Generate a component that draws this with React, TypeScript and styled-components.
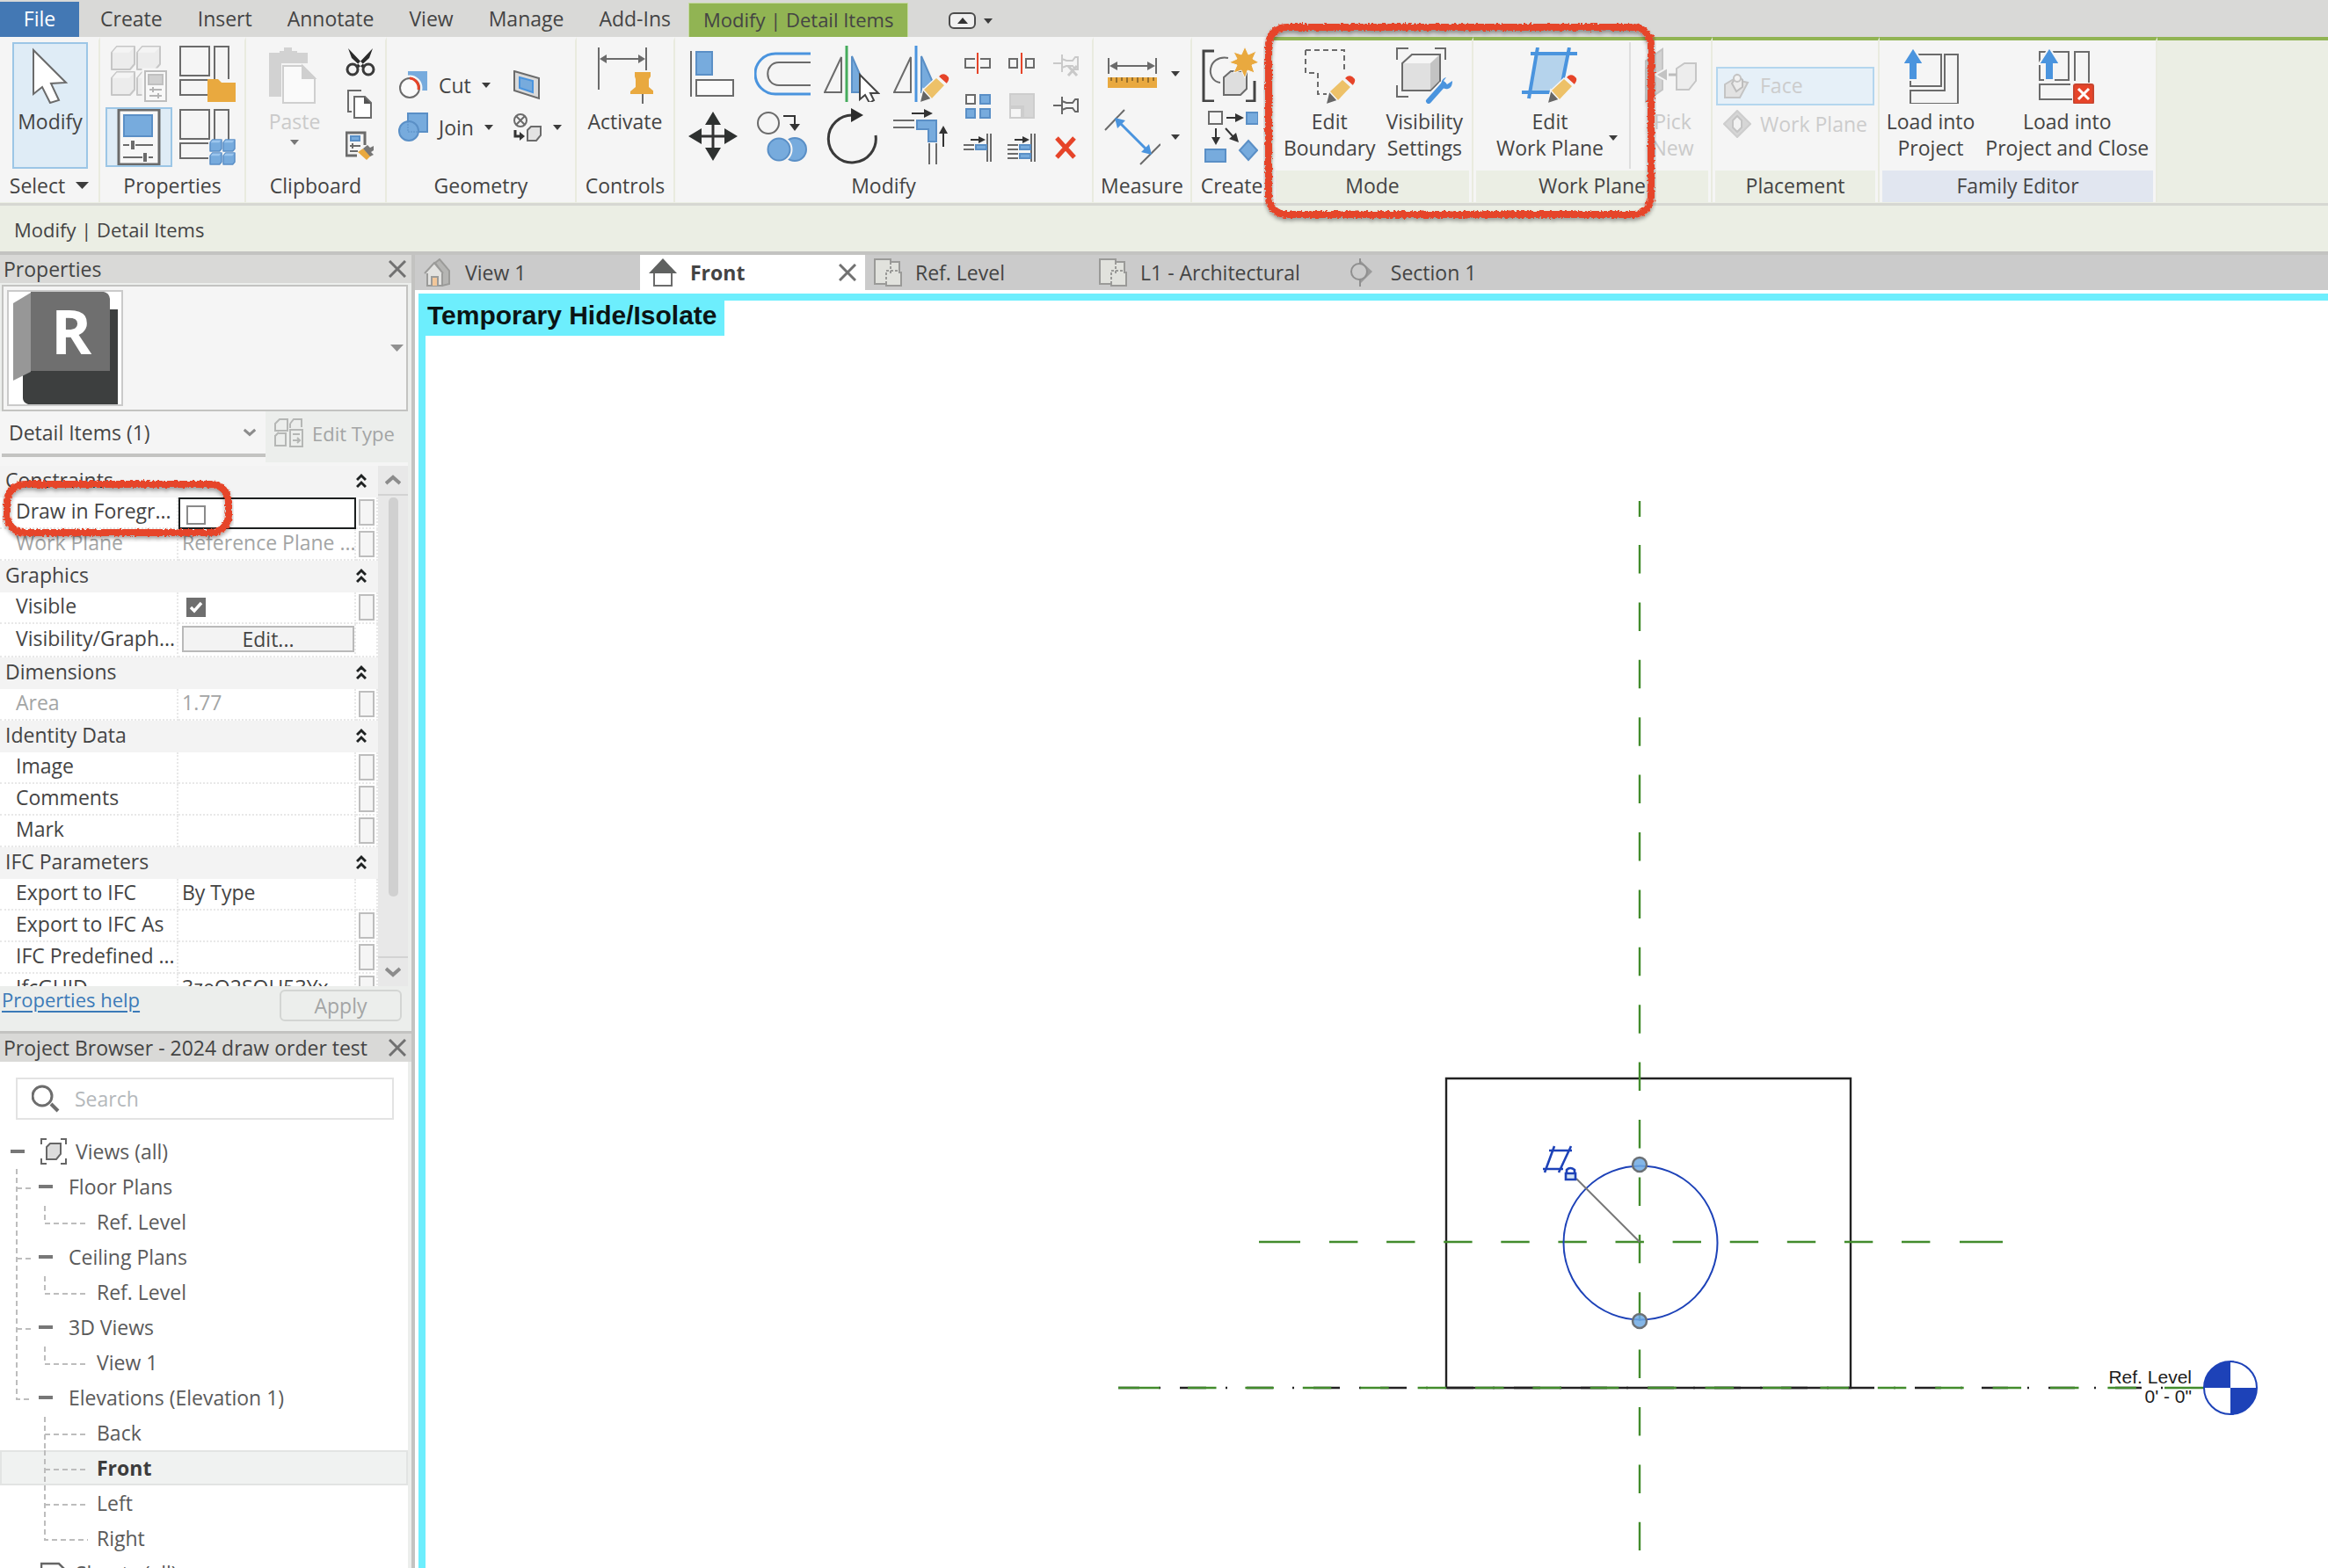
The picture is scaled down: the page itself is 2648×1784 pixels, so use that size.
import React from "react";
import styled, { createGlobalStyle, css } from "styled-components";

const c = {
  bar: "#d9d9d7",
  panel: "#f5f5f5",
  olive: "#ebeee4",
  green: "#91b453",
  rule: "#c3c3c1",
  soft: "#eceeec",
  text: "#444444",
  muted: "#a3a5a5",
  faint: "#cacaca",
  line: "#6b6b6b",
  sky: "#77abdd",
  skyLine: "#5a8fc6",
  azure: "#4a94de",
  amber: "#e9a93f",
  red: "#e64429",
  cyan: "#6deefd",
  ref: "#428c2c",
  ink: "#1d42b8",
};

const GlobalStyle = createGlobalStyle`
  *, *::before, *::after { box-sizing: border-box; }
  body { margin: 0; overflow: hidden; }
  body, button, input, select {
    font-family: "Open Sans", "Noto Sans", sans-serif;
    font-size: 23px;
    color: ${c.text};
  }
  button { background: none; border: 0; padding: 0; margin: 0; cursor: pointer; }
  svg { display: block; flex: none; }
  ul { list-style: none; margin: 0; padding: 0; }
`;

const Shell = styled.div`
  position: relative;
  height: 100vh;
  display: flex;
  flex-direction: column;
  background: #fff;
  overflow: hidden;
`;

/* ---------- ribbon tabs ---------- */

const TabBar = styled.nav`
  display: flex;
  height: 42px;
  flex: none;
  padding-top: 2px;
  background: ${c.bar};
`;

const RibbonTab = styled.button<{ $kind?: "file" | "active" }>`
  padding: 0 20px;
  line-height: 38px;
  padding-bottom: 2px;
  white-space: nowrap;
  ${(p) =>
    p.$kind === "file" &&
    css`
      width: 90px;
      margin-right: 4px;
      background: #4378b4;
      color: #fff;
    `}
  ${(p) =>
    p.$kind === "active" &&
    css`
      padding: 0 16px 2px;
      margin-top: 1px;
      border: 1px solid #c5dba0;
      border-bottom: 0;
      font-size: 22px;
      line-height: 36px;
      background: ${c.green};
    `}
`;

const RibbonToggle = styled.button`
  display: flex;
  align-items: center;
  gap: 8px;
  margin-left: 46px;
  padding-top: 4px;
`;

/* ---------- ribbon ---------- */

const Ribbon = styled.section`
  display: flex;
  flex: none;
  padding-bottom: 1px;
  border-bottom: 3px solid #d6d7d2;
  background: ${c.olive};
`;

const Panel = styled.div<{ $w: number; $context?: boolean }>`
  flex: none;
  display: flex;
  flex-direction: column;
  width: ${(p) => p.$w}px;
  border-top: 4px solid ${(p) => (p.$context ? c.green : c.panel)};
  border-right: 2px solid #e9ebdf;
  background: ${c.panel};
`;

const RibbonRest = styled.div`
  flex: 1;
  border-top: 4px solid ${c.green};
`;

const PanelTitle = styled.h2<{ $bg?: string }>`
  display: flex;
  justify-content: center;
  align-items: center;
  gap: 12px;
  height: 36px;
  margin: 0 3px;
  padding-bottom: 2px;
  font-size: 23px;
  font-weight: 400;
  white-space: nowrap;
  background: ${(p) => p.$bg ?? "transparent"};
`;

const Row = styled.div<{ $gap?: number; $justify?: string; $pad?: string }>`
  display: flex;
  align-items: flex-start;
  height: 148px;
  gap: ${(p) => p.$gap ?? 0}px;
  justify-content: ${(p) => p.$justify ?? "center"};
  padding: ${(p) => p.$pad ?? "2px 0 0"};
`;

const Matrix = styled.div<{ $cols: string; $row: number; $gap?: number; $pad?: string }>`
  display: grid;
  grid-template-columns: ${(p) => p.$cols};
  grid-auto-rows: ${(p) => p.$row}px;
  gap: ${(p) => p.$gap ?? 0}px;
  padding: ${(p) => p.$pad ?? "0"};
  align-content: start;
  height: 148px;
`;

const activeBox = css`
  border: 2px solid #9cc6e6;
  background: #dfecf6;
`;

const BigButton = styled.button<{ $active?: boolean; $off?: boolean }>`
  display: flex;
  flex-direction: column;
  align-items: center;
  padding: 4px 4px 0;
  height: 144px;
  line-height: 30px;
  white-space: pre-line;
  border: 2px solid transparent;
  color: ${(p) => (p.$off ? c.faint : c.text)};
  ${(p) => p.$active && activeBox}
  svg + span { margin-top: 5px; }
  span + svg { margin-top: 6px; }
`;

const IconButton = styled.button<{ $active?: boolean; $left?: boolean }>`
  display: flex;
  align-items: center;
  justify-content: ${(p) => (p.$left ? "flex-start" : "center")};
  gap: 12px;
  white-space: nowrap;
  ${(p) => p.$active && activeBox}
`;

const SmallStack = styled.div`
  display: flex;
  flex-direction: column;
  gap: 14px;
  padding-top: 5px;
`;

const SplitButton = styled.div`
  display: flex;
  flex: 0 0 179px;
  padding-left: 20px;
  height: 144px;
  border-right: 2px solid #dedede;
  > button + button { align-self: flex-start; padding-top: 106px; }
`;

const Fill = styled.div`
  flex: 1;
  display: flex;
  justify-content: center;
  padding-left: 4px;
`;

const PlaceButton = styled.button<{ $active?: boolean }>`
  display: flex;
  align-items: center;
  gap: 10px;
  height: 44px;
  width: 100%;
  padding: 0 0 2px 6px;
  border: 2px solid ${(p) => (p.$active ? "#b4d6ee" : "transparent")};
  background: ${(p) => (p.$active ? "#e6f0f8" : "transparent")};
  color: #cccccc;
  white-space: nowrap;
`;

const OptionsBar = styled.div`
  flex: none;
  height: 56px;
  padding-left: 16px;
  font-size: 22px;
  line-height: 54px;
  background: ${c.olive};
  border-bottom: 4px solid ${c.rule};
`;

/* ---------- workspace ---------- */

const Workspace = styled.main`
  flex: 1;
  min-height: 0;
  display: flex;
`;

const Dock = styled.aside`
  flex: 0 0 472px;
  display: flex;
  flex-direction: column;
  border-right: 4px solid ${c.rule};
  background: ${c.soft};
`;

const Palette = styled.section<{ $grow: number }>`
  flex: ${(p) => p.$grow} 1 0;
  min-height: 0;
  display: flex;
  flex-direction: column;
  & + & { border-top: 3px solid ${c.rule}; }
`;

const PaletteHeader = styled.header`
  display: flex;
  align-items: center;
  justify-content: space-between;
  flex: none;
  height: 32px;
  padding: 0 6px 0 4px;
  background: ${c.bar};
`;

const PaletteTitle = styled.h2`
  margin: 0;
  font-size: 23px;
  line-height: 32px;
  font-weight: 400;
  white-space: nowrap;
`;

const TypeSelector = styled.button`
  display: flex;
  align-items: center;
  justify-content: space-between;
  flex: none;
  height: 144px;
  margin: 2px 4px 0 2px;
  padding: 0 3px 0 4px;
  border: 2px solid ${c.rule};
  background: ${c.panel};
`;

const Thumb = styled.span`
  width: 132px;
  height: 132px;
  border: 2px solid #cacaca;
  background: #fff;
`;

const FilterRow = styled.div`
  display: flex;
  flex: none;
  height: 62px;
  margin-right: 4px;
  padding-left: 2px;
  background: ${c.panel};
`;

const FilterField = styled.div`
  flex: 1;
  display: flex;
  align-items: center;
  height: 52px;
  padding-right: 11px;
  border-bottom: 4px solid ${c.rule};
`;

const FilterSelect = styled.select`
  flex: 1;
  appearance: none;
  border: 0;
  height: 44px;
  padding: 0 0 0 8px;
  background: transparent;
`;

const EditType = styled.button`
  display: flex;
  align-items: center;
  gap: 9px;
  width: 162px;
  height: 58px;
  padding: 0 0 8px 10px;
  background: ${c.soft};
  color: ${c.muted};
  font-size: 22px;
  white-space: nowrap;
`;

const GridArea = styled.div`
  flex: 1;
  min-height: 0;
  display: flex;
  margin-right: 4px;
  overflow: hidden;
`;

const GridClip = styled.div`
  flex: 1;
  overflow: hidden;
  background: #fff;
`;

const PropTable = styled.table`
  width: 100%;
  table-layout: fixed;
  border-collapse: separate;
  border-spacing: 0;
`;

const GroupRow = styled.tr`
  background: #f3f3f3;
  th {
    height: 36px;
    padding: 0 0 4px 6px;
    font-weight: 400;
    text-align: left;
    line-height: 32px;
  }
  td { padding: 0 0 2px; }
`;

const PropRow = styled.tr<{ $off?: boolean }>`
  color: ${(p) => (p.$off ? c.muted : c.text)};
  th, td {
    height: 36px;
    padding: 0 0 4px;
    font-weight: 400;
    text-align: left;
    line-height: 30px;
    white-space: nowrap;
    overflow: hidden;
    border-right: 2px dotted #e8e8e8;
    border-bottom: 2px dotted #e8e8e8;
  }
  th { padding-left: 18px; }
  td { padding-left: 4px; }
  td:last-child { padding: 0 0 0 3px; }
`;

const FocusCell = styled.td`
  && {
    padding: 0 0 0 6px;
    border: 2px solid #1c1f1f;
  }
`;

const Check = styled.input`
  appearance: none;
  display: block;
  width: 22px;
  height: 22px;
  margin: 3px 0 0 1px;
  border: 2px solid #8a8a8a;
  background: #fff;
  &:checked {
    margin-left: 5px;
    border-color: #6e6e6e;
    background: #6e6e6e url("data:image/svg+xml,%3Csvg xmlns='http://www.w3.org/2000/svg' viewBox='0 0 18 18'%3E%3Cpath d='M3 9l4 4 8-9' fill='none' stroke='white' stroke-width='3.4'/%3E%3C/svg%3E") center / 18px 18px no-repeat;
  }
`;

const EditCellButton = styled.button`
  display: block;
  width: 196px;
  height: 30px;
  margin-top: 2px;
  border: 2px solid #b9b9b9;
  background: #f3f3f3;
  line-height: 26px;
`;

const Associate = styled.button`
  display: block;
  width: 18px;
  height: 30px;
  border: 2px solid #bdbdbd;
  background: #f5f5f5;
`;

const ScrollTrack = styled.div`
  flex: 0 0 34px;
  display: flex;
  flex-direction: column;
  align-items: center;
  background: #e8e8e8;
`;

const ScrollButton = styled.button<{ $end?: boolean }>`
  display: flex;
  align-items: center;
  justify-content: center;
  width: 34px;
  height: 34px;
  border: 0 solid #d3d3d3;
  border-bottom-width: ${(p) => (p.$end ? 0 : 2)}px;
  border-top-width: ${(p) => (p.$end ? 2 : 0)}px;
`;

const ScrollLane = styled.div`
  flex: 1;
  padding-top: 2px;
`;

const ScrollThumb = styled.div`
  width: 11px;
  height: 87%;
  border-radius: 5px;
  background: #d0d0d0;
`;

const PaletteFooter = styled.footer`
  display: flex;
  justify-content: space-between;
  align-items: flex-start;
  flex: none;
  height: 51px;
  padding: 4px 11px 0 2px;
`;

const HelpLink = styled.a`
  color: #3b7ab8;
  font-size: 22px;
  line-height: 22px;
  text-underline-offset: 4px;
  text-decoration-thickness: 2px;
`;

const ApplyButton = styled.button`
  width: 139px;
  height: 36px;
  border: 2px solid #d3d5d3;
  border-radius: 6px;
  color: ${c.muted};
  line-height: 32px;
`;

const BrowserBody = styled.div`
  flex: 1;
  min-height: 0;
  margin-right: 4px;
  padding-top: 18px;
  background: #fff;
  overflow: hidden;
`;

const SearchBox = styled.label`
  display: flex;
  align-items: center;
  gap: 17px;
  height: 48px;
  margin: 0 16px 16px 18px;
  padding-left: 16px;
  border: 2px solid #e3e3e3;
  input {
    flex: 1;
    min-width: 0;
    border: 0;
    padding: 0;
    outline: 0;
    background: transparent;
  }
  input::placeholder { color: #b4b8bb; opacity: 1; }
`;

const TreeItem = styled.li<{ $selected?: boolean }>`
  display: flex;
  height: 40px;
  background: ${(p) => (p.$selected ? "#f0f2f1" : "transparent")};
  box-shadow: ${(p) => (p.$selected ? "inset 0 0 0 2px #e2e4e3" : "none")};
  button {
    line-height: 38px;
    font-weight: ${(p) => (p.$selected ? 700 : 400)};
    color: ${(p) => (p.$selected ? "#3c3c3c" : "#5a5a5a")};
    white-space: nowrap;
  }
`;

const TreeLabel = styled.button`
  display: flex;
  align-items: center;
  gap: 10px;
`;

const ViewArea = styled.section`
  flex: 1;
  min-width: 0;
  display: flex;
  flex-direction: column;
`;

const ViewTabs = styled.nav`
  display: flex;
  flex: none;
  height: 40px;
  background: #cbcbcb;
`;

const ViewTab = styled.div<{ $active?: boolean }>`
  display: flex;
  align-items: center;
  min-width: 256px;
  padding: 0 ${(p) => (p.$active ? 10 : 46)}px 0 10px;
  background: ${(p) => (p.$active ? "#fff" : "transparent")};
  > button:first-child {
    display: flex;
    align-items: center;
    flex: 1;
    gap: 15px;
    line-height: 40px;
    font-weight: ${(p) => (p.$active ? 700 : 400)};
    white-space: nowrap;
  }
`;

const Canvas = styled.div`
  flex: 1;
  min-height: 0;
  margin: 4px 0 0 4px;
  border: solid ${c.cyan};
  border-width: 8px 0 0 8px;
  overflow: hidden;
`;

const HideIsolate = styled.h1`
  width: max-content;
  height: 40px;
  margin: 0;
  padding: 0 8px 0 2px;
  background: ${c.cyan};
  color: #0b1414;
  font: 700 30px/34px "Liberation Sans", Arial, sans-serif;
`;

const Drawing = styled.svg`
  width: 100%;
  height: auto;
  font-family: "Liberation Sans", Arial, sans-serif;
`;

const Marker = styled.svg<{ $x: number; $y: number }>`
  position: absolute;
  left: ${(p) => p.$x}px;
  top: ${(p) => p.$y}px;
  pointer-events: none;
`;

/* ---------- icons ---------- */

type IconProps = { s?: number; children: React.ReactNode };
const Ico = ({ s = 64, children }: IconProps) => (
  <svg width={s} height={s} viewBox={`0 0 ${s} ${s}`} fill="none" stroke={c.line} strokeWidth={2} aria-hidden="true">
    {children}
  </svg>
);

const Caret = ({ w = 10, fill = "#3c3c3c" }: { w?: number; fill?: string }) => (
  <svg width={w} height={w > 12 ? 8 : 6} viewBox="0 0 10 6" preserveAspectRatio="none" aria-hidden="true">
    <path d="M0 0h10L5 6z" fill={fill} />
  </svg>
);

const Close = () => (
  <svg width={20} height={20} viewBox="0 0 20 20" stroke="#717171" strokeWidth={3} aria-hidden="true">
    <path d="M1 1l18 18M19 1L1 19" />
  </svg>
);

const Pencil = ({ x = 0, y = 0 }: { x?: number; y?: number }) => (
  <g transform={`translate(${x} ${y})`} stroke="#f5f5f5" strokeWidth={1.5}>
    <path d="M30 65l4-16 11 11z" fill="#666" />
    <path d="M34 50l15-14 10 9-15 16z" fill="#edc168" />
    <path d="M51 35c3-4 6-5 10-2s4 6 0 11z" fill={c.red} />
  </g>
);

const Cube = ({ x, y, s, fill, line, top }: { x: number; y: number; s: number; fill: string; line: string; top: string }) => (
  <g transform={`translate(${x} ${y})`} stroke={line} strokeWidth={s > 20 ? 2 : 1.5} strokeLinejoin="round">
    <path d={`M1 ${s * 0.28}L${s * 0.25} 1H${s - 1}V${s * 0.75}L${s * 0.78} ${s - 1}H1z`} fill={fill} />
    <path d={`M1.500 ${s * 0.28}L${s * 0.25} 1.500H${s - 1.5}L${s * 0.75} ${s * 0.28}z`} fill={top} stroke="none" />
  </g>
);

const CursorIcon = () => (
  <Ico><path d="M13 3v50l10-8 9 18 10-3-9-19 17-1z" fill="#fff" /></Ico>
);

const TypePropsIcon = () => (
  <Ico>
    {[[0, 0], [29, 0], [0, 29], [29, 29]].map(([x, y]) => (
      <Cube key={`${x}-${y}`} x={x} y={y} s={28} fill="#ececec" line="#c6c6c6" top="#f4f4f4" />
    ))}
    <rect x="37" y="27" width="27" height="37" fill="#f5f5f5" stroke="#f5f5f5" strokeWidth="3" />
    <rect x="39" y="29" width="24" height="34" fill="#f8f8f8" stroke="#bdbdbd" />
    <path d="M43 33h16v11H43z" fill="#d0d0d0" stroke="#c0c0c0" />
    <path d="M44 50h14M44 57h14M48 47v6M54 54v6" stroke="#b5b5b5" />
  </Ico>
);

const WindowLayout = () => <path d="M1 1h33v33H1zM40 38V1h16v37M33 39H1v17h32" />;

const FolderTypeIcon = () => (
  <Ico><WindowLayout /><path d="M32 38h12l4 4h16v22H32z" fill={c.amber} stroke="none" /></Ico>
);

const FamilyTypesIcon = () => (
  <Ico>
    <WindowLayout />
    {[[34, 34], [49, 34], [34, 49], [49, 49]].map(([x, y]) => (
      <Cube key={`${x}-${y}`} x={x} y={y} s={15} fill={c.sky} line={c.skyLine} top="#9cc6ee" />
    ))}
  </Ico>
);

const PropertiesIcon = () => (
  <Ico>
    <rect x="9" y="1" width="46" height="62" fill="#f7f7f7" strokeWidth="3" />
    <rect x="15" y="7" width="32" height="24" fill={c.sky} stroke={c.skyLine} />
    <path d="M14 41h7M28 41h20M14 55h22M43 55h5" />
    <path d="M25 36v10M39 50v10" strokeWidth="4" />
  </Ico>
);

const PasteIcon = () => (
  <Ico>
    <path d="M3 6h12V4h5V0h9v4h6v2h12v12H17v38H3z" fill="#d2d2d2" stroke="none" />
    <path d="M19 21h22l14 14v28H19z" fill="#fafafa" stroke="#cfcfcf" />
    <path d="M41 21v14h14z" fill="#cfcfcf" stroke="#cfcfcf" />
  </Ico>
);

const ScissorsIcon = () => (
  <Ico s={34}>
    <path d="M3 2l20 21-4 1L7 13zM31 2L11 23l4 1 12-11z" fill="#2b2b2b" stroke="none" />
    <circle cx="8" cy="26" r="6" stroke="#3a3a3a" strokeWidth="3" />
    <circle cx="26" cy="26" r="6" stroke="#3a3a3a" strokeWidth="3" />
  </Ico>
);

const CopyIcon = () => (
  <Ico s={34}>
    <path d="M7 26H3V2h15" />
    <path d="M10 9h12l7 7v17H10z" fill="#fff" />
    <path d="M21 9v8h8z" fill="#555" stroke="none" />
  </Ico>
);

const MatchIcon = () => (
  <Ico s={34}>
    <path d="M13 28H1V2h21v14" strokeWidth="3" />
    <path d="M6 6h10v5H6z" fill={c.sky} stroke={c.skyLine} />
    <path d="M5 17h12M5 23h9M8 14v6" />
    <path d="M14 24l6-4 9 8-5 5z" fill={c.amber} stroke="none" />
    <path d="M20 20l5-4 3 3 4-2v5l-3 2 3 3-4 2z" fill="#777" stroke="none" />
  </Ico>
);

const CutGeoIcon = () => (
  <Ico s={34}>
    <path d="M11 1h22v22H22L11 9z" fill={c.sky} stroke="none" />
    <circle cx="13" cy="20" r="12" fill="#f5f5f5" stroke="#f5f5f5" strokeWidth="5" />
    <circle cx="13" cy="20" r="11" fill="#fafafa" />
    <path d="M13 9a11 11 0 0 1 10 13" stroke={c.red} strokeWidth="3" />
  </Ico>
);

const JoinGeoIcon = () => (
  <Ico s={34}>
    <path d="M11 1h22v21H11z" fill={c.sky} stroke={c.skyLine} />
    <circle cx="12" cy="21" r="11" fill={c.sky} stroke={c.skyLine} />
    <path d="M11 10v12h11" stroke={c.skyLine} strokeDasharray="2 1" strokeWidth="1" />
  </Ico>
);

const CopeIcon = () => (
  <Ico s={34}>
    <path d="M2 1l28 8v23L2 23z" fill="#dadada" />
    <path d="M8 8l15 4v13L8 20z" fill={c.sky} stroke={c.azure} />
  </Ico>
);

const PaintIcon = () => (
  <Ico s={34}>
    <circle cx="9" cy="9" r="7" />
    <path d="M4 4l10 10M14 4L4 14" />
    <path d="M3 20v7h6" stroke="#333" strokeWidth="3" />
    <path d="M8 22l6 5-6 5z" stroke="none" fill="#333" />
    <path d="M17 20l4-4h11v10l-5 6H17z" fill="#e3e3e3" />
  </Ico>
);

const ActivateIcon = () => (
  <Ico>
    <path d="M2 0v48M56 0v26M6 13h46" />
    <path d="M3 13l8-5v10zM55 13l-8-5v10z" fill={c.line} stroke="none" />
    <path d="M43 28h18v5l-2 3v9l6 5v3H38v-3l6-5v-9l-1-3z" fill={c.amber} stroke="none" />
    <path d="M52 53v11" />
  </Ico>
);

const AlignIcon = () => (
  <Ico>
    <path d="M7 6v52" />
    <path d="M13 7h18v26H13z" fill={c.sky} stroke={c.skyLine} />
    <path d="M13 39h42v18H13z" fill="#fafafa" />
  </Ico>
);

const OffsetIcon = () => (
  <Ico>
    <path d="M64 9H24a23 23 0 0 0 0 46h40" stroke={c.azure} strokeWidth="3" />
    <path d="M64 19H28c-17 0-17 26 0 26h36" />
  </Ico>
);

const Mirror = ({ axis, children }: { axis: string; children: React.ReactNode }) => (
  <Ico>
    <path d="M20 13v40H1z" />
    <path d="M32 12l18 41H32z" fill={c.sky} stroke={c.skyLine} />
    <path d="M26 0v64" stroke={axis} strokeWidth="3" />
    {children}
  </Ico>
);

const MirrorPickIcon = () => (
  <Mirror axis="#45ab5c"><path d="M41 33v28l6-5 5 9 5-3-4-8h9z" fill="#fff" stroke="#444" /></Mirror>
);
const MirrorDrawIcon = () => <Mirror axis={c.azure}><Pencil /></Mirror>;

const MoveIcon = () => (
  <Ico>
    <path d="M32 14v36M14 32h36" stroke="#333" strokeWidth="3" />
    <path d="M32 4l9 15H23zM32 60l9-15H23zM4 32l15-9v18zM60 32l-15-9v18z" fill="#2e3130" stroke="none" />
  </Ico>
);

const CopyToolIcon = () => (
  <Ico>
    <circle cx="16" cy="17" r="12" />
    <circle cx="46" cy="47" r="13" fill={c.sky} stroke={c.skyLine} />
    <circle cx="28" cy="47" r="14" fill={c.sky} stroke="#f5f5f5" strokeWidth="3" />
    <circle cx="28" cy="47" r="12.500" stroke={c.skyLine} />
    <path d="M33 9h13v12" stroke="#333" />
    <path d="M40 18h12l-6 8z" fill="#333" stroke="none" />
  </Ico>
);

const RotateIcon = () => (
  <Ico>
    <path d="M34 8A27 27 0 1 0 59 31" stroke="#3a3a3a" strokeWidth="3" />
    <path d="M31 0l14 8-14 8z" fill="#2b2b2b" stroke="none" />
  </Ico>
);

const TrimIcon = () => (
  <Ico>
    <path d="M0 14h24M0 22h24M41 40v24M49 40v24" />
    <path d="M27 14h22v24H40V24H27z" fill={c.sky} stroke={c.skyLine} />
    <path d="M21 6h16M57 44V26" stroke="#333" />
    <path d="M35 1l10 5-10 5zM52 29l5-9 5 9z" fill="#333" stroke="none" />
  </Ico>
);

const SplitIcon = ({ gap }: { gap?: boolean }) => (
  <Ico s={32}>
    {gap ? <path d="M2 11h9v10H2zM21 11h9v10h-9z" /> : <path d="M13 11H2v10h11M19 11h11v10H19" />}
    <path d="M16 4v24" stroke={c.red} />
  </Ico>
);

const PinIcon = ({ off }: { off?: boolean }) => (
  <Ico s={32}>
    <g stroke={off ? "#c9c9c9" : "#666"}>
      <path d="M2 16h10M12 6v20M12 11l5 2h7l3-4h3v14h-3l-3-4h-7l-5 2" />
      {off && <path d="M19 19l10 11M29 19L19 30" strokeWidth="3" />}
    </g>
  </Ico>
);

const ArrayIcon = () => (
  <Ico s={32}>
    <path d="M3 4h10v10H3z" fill="#fafafa" />
    <path d="M19 4h11v10H19zM3 20h10v10H3zM19 20h11v10H19z" fill={c.sky} stroke={c.skyLine} />
  </Ico>
);

const ScaleIcon = () => (
  <Ico s={32}>
    <path d="M3 3h27v27H18V17H3z" fill="#d6d6d6" stroke="#cdcdcd" />
    <path d="M3 19h13v11H3z" stroke="#cdcdcd" />
  </Ico>
);

const ExtendIcon = ({ multi }: { multi?: boolean }) => (
  <Ico s={32}>
    <path d="M27 0v32M31 0v32" />
    <path d={multi ? "M0 13h12M0 18h12M0 23h12M0 28h12" : "M0 13h12M0 18h12"} />
    <path d={multi ? "M14 13h12v5H14zM14 23h12v5H14z" : "M14 13h12v5H14z"} fill={c.sky} stroke={c.skyLine} />
    <path d="M8 7h10" stroke="#333" />
    <path d="M17 3l8 4-8 4z" fill="#333" stroke="none" />
  </Ico>
);

const DeleteIcon = () => (
  <Ico s={32}><path d="M6 5l20 22M26 5L6 27" stroke={c.red} strokeWidth="5" /></Ico>
);

const RulerIcon = () => (
  <Ico>
    <path d="M5 14v18M59 14v18M9 23h46" />
    <path d="M6 23l9-5v10zM58 23l-9-5v10z" fill={c.line} stroke="none" />
    <path d="M4 36h56v12H4z" fill={c.amber} stroke="none" />
    <path d="M8 36v4M14 36v6M20 36v4M26 36v6M32 36v4M38 36v6M44 36v4M50 36v6M56 36v4" stroke="#7d5c26" strokeWidth="1.500" />
  </Ico>
);

const AlignedDimIcon = () => (
  <Ico>
    <path d="M1 24L23 1M41 63L64 40" />
    <path d="M16 14l34 34" stroke={c.azure} strokeWidth="3" />
    <path d="M12 10l12 3-9 9zM54 52l-12-3 9-9z" fill={c.azure} stroke="none" />
  </Ico>
);

const CreateSimilarIcon = () => (
  <Ico>
    <path d="M14 6H2v57h12M50 63h10V40" stroke="#444" strokeWidth="3" />
    <path d="M30 14c-24-4-26 26-9 28" />
    <path d="M25 36l8-7h18v20l-7 7H25z" fill="#dedede" />
    <path d="M49 1l4 9 9-4-4 9 7 4-8 3 3 9-8-3-3 9-4-9-9 3 4-9-9-3 9-4-4-8 9 3z" fill={c.amber} stroke="#f5f5f5" strokeWidth="1" />
  </Ico>
);

const CreateAssemblyIcon = () => (
  <Ico>
    <path d="M8 3h15v14H8z" />
    <path d="M51 4h13v13H51z" fill={c.sky} stroke={c.skyLine} />
    <path d="M4 46h23v14H4z" fill={c.sky} stroke={c.skyLine} />
    <path d="M53 36l10 11-10 11-10-11z" fill={c.sky} stroke={c.skyLine} />
    <path d="M28 10h12M16 22v12M27 22l10 11" stroke="#333" />
    <path d="M38 5l10 5-10 5zM11 32h10l-5 9zM31 34l8-7 3 11z" fill="#333" stroke="none" />
  </Ico>
);

const EditBoundaryIcon = () => (
  <Ico>
    <path d="M5 3h44v26M5 3v26h14v24h10" strokeDasharray="6 4" />
    <Pencil x={-2} />
  </Ico>
);

const VisibilityIcon = () => (
  <Ico>
    <path d="M1 14V1h13M44 1h12v13M1 43v13h13" />
    <path d="M7 18L18 8h32v30L39 49H7z" fill="#e0e0e0" />
    <path d="M9 18l10-9h29l-9 9z" fill="#f6f6f6" stroke="none" />
    <path d="M39 18l10-9v29L39 48z" fill="#c3c3c3" stroke="none" />
    <path d="M37 62l17-20" stroke="#f5f5f5" strokeWidth="10" />
    <path d="M37 61l17-19" stroke={c.azure} strokeWidth="6" strokeLinecap="round" />
    <path d="M57 34c-9 3-6 15 2 13 4-1 5-5 5-9l-6 4-4-4z" fill={c.azure} stroke="none" />
  </Ico>
);

const WorkPlaneIcon = () => (
  <Ico>
    <path d="M17 7h36l-8 42H10z" fill="#b5d3ec" stroke="none" />
    <path d="M10 7h53M0 51h42M18 0L8 58M54 0l-8 40" stroke={c.azure} strokeWidth="4" />
    <Pencil x={-1} y={-1} />
  </Ico>
);

const PickNewIcon = () => (
  <Ico>
    <path d="M0 16L20 2v46L0 62z" fill="#d2d2d2" stroke="#c4c4c4" />
    <path d="M36 24l9-6h13v20l-8 10H36z" fill="#ededed" stroke="#c6c6c6" />
    <path d="M36 31H20" stroke="#bdbdbd" strokeWidth="3" />
    <path d="M26 23v16L12 31z" fill="#c3c3c3" stroke="#f5f5f5" />
  </Ico>
);

const FaceIcon = () => (
  <Ico s={32}>
    <path d="M2 15L12 9l16 4-9 17H2z" fill="#e2e2e2" stroke="#c4c4c4" />
    <path d="M10 14l6-10 6 6v8l-7 5z" fill="#ececec" stroke="#bdbdbd" />
    <circle cx="16" cy="8" r="4" fill="#f2f2f2" stroke="#c4c4c4" />
  </Ico>
);

const PlaceWorkPlaneIcon = () => (
  <Ico s={32}>
    <path d="M16 1l15 15-15 15L1 16z" fill="#d6d6d6" stroke="#cdcdcd" />
    <path d="M11 12l5-5 5 5v8l-5 5-5-5z" fill="#f2f2f2" stroke="#c4c4c4" />
  </Ico>
);

const UpArrow = ({ x }: { x: number }) => (
  <path d={`M${x} 0l12 19h-7v18h-10V19h-7z`} fill={c.azure} stroke="#f5f5f5" />
);

const LoadIcon = () => (
  <Ico>
    <path d="M8 8h36v36H9v-8" />
    <path d="M63 8H48v41H9v15h54z" />
    <UpArrow x={12} />
  </Ico>
);

const LoadCloseIcon = () => (
  <Ico>
    <path d="M1 5h33v32H1zM41 38V5h16v35M36 42H1v17h37" />
    <UpArrow x={12} />
    <rect x="40" y="42" width="22" height="22" rx="2" fill={c.red} stroke="#c8452f" />
    <path d="M45 47l12 12M57 47L45 59" stroke="#fff" strokeWidth="3" />
  </Ico>
);

const RevitThumb = () => (
  <svg width={128} height={128} viewBox="0 0 128 128" aria-hidden="true">
    <path d="M16 60h108v68H22q-6-2-6-7z" fill="#3d3f3f" />
    <path d="M115 20h9v50h-9z" fill="#3d3f3f" />
    <path d="M5 13L25 1v90L5 101z" fill="#979797" />
    <path d="M25 0h83q6 1 7 8v82H25z" fill="#6f6f6f" />
    <text x="71" y="71" textAnchor="middle" fill="#fff" fontSize="70" fontWeight="700" fontFamily="Open Sans, sans-serif">R</text>
  </svg>
);

const EditTypeIcon = () => (
  <Ico s={34}>
    <g stroke="#b5b7b5">
      <path d="M1 6l5-5h9v13H1zM18 6l4-5h9v9M1 20l4-4M1 19v12h12V17H5M18 6v5" />
      <path d="M18 13h14v19H18z" fill={c.soft} />
      <path d="M21 18h8M21 25h8M26 22l3 3-3 3" />
    </g>
  </Ico>
);

const Collapse = () => (
  <svg width={12} height={18} viewBox="0 0 12 18" fill="none" stroke="#1f2222" strokeWidth={3} aria-hidden="true">
    <path d="M1 8l5-5 5 5M1 16l5-5 5 5" />
  </svg>
);

const Chevron = ({ up, w = 18, color = "#8c8c8c" }: { up?: boolean; w?: number; color?: string }) => (
  <svg width={w} height={12} viewBox="0 0 18 12" fill="none" stroke={color} strokeWidth={4} aria-hidden="true">
    <path d={up ? "M1 10l8-7 8 7" : "M1 2l8 7 8-7"} />
  </svg>
);

const SearchIcon = () => (
  <svg width={32} height={32} viewBox="0 0 32 32" fill="none" stroke="#6d6d6d" aria-hidden="true">
    <circle cx="12" cy="13" r="11" strokeWidth="3" />
    <path d="M22 22l8 8" strokeWidth="4" />
  </svg>
);

const HouseIcon = () => (
  <Ico s={32}>
    <g stroke="#9b9b99">
      <path d="M13 5l5-4 11 13v15l-8 2V17z" fill="#b5b5b3" />
      <path d="M4 17v14h17V17" fill="#e2e2e0" />
      <path d="M1 17L12 5l10 12" fill="#e2e2e0" />
      <path d="M9 31V21h7v10" fill="#f2c79a" />
    </g>
  </Ico>
);

const ElevationIcon = () => (
  <Ico s={32}>
    <path d="M6 15h20v16H6z" fill="#fff" />
    <path d="M16 0l16 17H0z" fill="#5f6160" stroke="none" />
  </Ico>
);

const PlanIcon = () => (
  <Ico s={32}>
    <path d="M1 1h18v3h10v12h2v15H14v-2H1z" fill="#e1e2dd" stroke="#9a9a98" />
    <path d="M19 4v13M14 29V14h16" stroke="#9a9a98" strokeDasharray="3 2" />
  </Ico>
);

const SectionIcon = () => (
  <Ico s={32}>
    <path d="M12 2l14 13-14 14z" fill="#9b9b9b" stroke="none" />
    <circle cx="11" cy="15" r="9" fill="#cbcbcb" stroke="#8f8f8f" />
    <path d="M12 0v6M12 24v8" stroke="#8f8f8f" />
  </Ico>
);

const ViewsIcon = () => (
  <svg width={30} height={30} viewBox="0 0 30 30" fill="none" stroke="#666" strokeWidth={2} aria-hidden="true">
    <path d="M1 7V1h6M23 1h6v6M1 23v6h6M29 23v6h-6" />
    <path d="M7 10l4-4h12v12l-5 6H7z" fill="#dcdcdc" />
  </svg>
);

const SheetsIcon = () => (
  <svg width={30} height={30} viewBox="0 0 30 30" fill="none" stroke="#666" strokeWidth={2.5} aria-hidden="true">
    <path d="M1 4h20l8 8v17H1z" />
  </svg>
);

/* ---------- data ---------- */

const tabs = ["Create", "Insert", "Annotate", "View", "Manage", "Add-Ins"];

type Prop = { name: string; value?: React.ReactNode; off?: boolean; noLink?: boolean; focus?: boolean };
const groups: { title: string; rows: Prop[] }[] = [
  {
    title: "Constraints",
    rows: [
      { name: "Draw in Foregr...", value: <Check type="checkbox" aria-label="Draw in Foreground" />, focus: true },
      { name: "Work Plane", value: "Reference Plane ...", off: true },
    ],
  },
  {
    title: "Graphics",
    rows: [
      { name: "Visible", value: <Check type="checkbox" defaultChecked aria-label="Visible" /> },
      { name: "Visibility/Graph...", value: <EditCellButton>Edit...</EditCellButton>, noLink: true },
    ],
  },
  { title: "Dimensions", rows: [{ name: "Area", value: "1.77", off: true }] },
  { title: "Identity Data", rows: [{ name: "Image" }, { name: "Comments" }, { name: "Mark" }] },
  {
    title: "IFC Parameters",
    rows: [
      { name: "Export to IFC", value: "By Type", noLink: true },
      { name: "Export to IFC As" },
      { name: "IFC Predefined ..." },
      { name: "IfcGUID", value: "3zeO2SOH53Yx..." },
    ],
  },
];

const branch = "M19 0V40M19 22H36";
const leaf = "M19 0V40M51 2V22H100";
const tree: { label: string; w: number; d: string; dash?: number; icon?: React.ReactNode; selected?: boolean }[] = [
  { label: "Views (all)", w: 46, d: "", dash: 12, icon: <ViewsIcon /> },
  { label: "Floor Plans", w: 78, d: branch, dash: 44 },
  { label: "Ref. Level", w: 110, d: leaf },
  { label: "Ceiling Plans", w: 78, d: branch, dash: 44 },
  { label: "Ref. Level", w: 110, d: leaf },
  { label: "3D Views", w: 78, d: branch, dash: 44 },
  { label: "View 1", w: 110, d: leaf },
  { label: "Elevations (Elevation 1)", w: 78, d: "M19 0V22H36", dash: 44 },
  { label: "Back", w: 110, d: "M51 2V40M51 22H100" },
  { label: "Front", w: 110, d: "M51 0V40M51 22H100", selected: true },
  { label: "Left", w: 110, d: "M51 0V40M51 22H100" },
  { label: "Right", w: 110, d: "M51 0V22H100" },
  { label: "Sheets (all)", w: 46, d: "", icon: <SheetsIcon /> },
];

const modifyTools: [string, React.ReactNode][] = [
  ["Align", <AlignIcon />],
  ["Offset", <OffsetIcon />],
  ["Mirror - Pick Axis", <MirrorPickIcon />],
  ["Mirror - Draw Axis", <MirrorDrawIcon />],
  ["Move", <MoveIcon />],
  ["Copy", <CopyToolIcon />],
  ["Rotate", <RotateIcon />],
  ["Trim to Corner", <TrimIcon />],
];

const smallTools: [string, React.ReactNode][] = [
  ["Split Element", <SplitIcon />],
  ["Split with Gap", <SplitIcon gap />],
  ["Unpin", <PinIcon off />],
  ["Array", <ArrayIcon />],
  ["Scale", <ScaleIcon />],
  ["Pin", <PinIcon />],
  ["Trim Single", <ExtendIcon />],
  ["Trim Multiple", <ExtendIcon multi />],
  ["Delete", <DeleteIcon />],
];

/* ---------- sections ---------- */

const RibbonPanels = () => (
  <Ribbon>
    <Panel $w={114}>
      <Row $pad="2px 0 0 2px"><BigButton $active><CursorIcon /><span>Modify</span></BigButton></Row>
      <PanelTitle>Select <Caret w={15} /></PanelTitle>
    </Panel>
    <Panel $w={166}>
      <Matrix $cols="76px 72px" $row={68} $gap={4} $pad="4px 0 0 6px">
        <IconButton aria-label="Type Properties"><TypePropsIcon /></IconButton>
        <IconButton aria-label="Family Category"><FolderTypeIcon /></IconButton>
        <IconButton aria-label="Properties" $active><PropertiesIcon /></IconButton>
        <IconButton aria-label="Family Types"><FamilyTypesIcon /></IconButton>
      </Matrix>
      <PanelTitle>Properties</PanelTitle>
    </Panel>
    <Panel $w={160}>
      <Row $justify="space-between" $pad="2px 11px 0 17px">
        <BigButton $off><PasteIcon /><span>Paste</span><Caret fill="#777" /></BigButton>
        <SmallStack>
          <IconButton aria-label="Cut to Clipboard"><ScissorsIcon /></IconButton>
          <IconButton aria-label="Copy to Clipboard"><CopyIcon /></IconButton>
          <IconButton aria-label="Match Type"><MatchIcon /></IconButton>
        </SmallStack>
      </Row>
      <PanelTitle>Clipboard</PanelTitle>
    </Panel>
    <Panel $w={216}>
      <Matrix $cols="130px 1fr" $row={48} $pad="27px 0 0 13px">
        <IconButton $left><CutGeoIcon />Cut <Caret /></IconButton>
        <IconButton $left aria-label="Wall Opening"><CopeIcon /></IconButton>
        <IconButton $left><JoinGeoIcon />Join <Caret /></IconButton>
        <IconButton $left aria-label="Paint"><PaintIcon /><Caret /></IconButton>
      </Matrix>
      <PanelTitle>Geometry</PanelTitle>
    </Panel>
    <Panel $w={112}>
      <Row><BigButton><ActivateIcon /><span>Activate</span></BigButton></Row>
      <PanelTitle>Controls</PanelTitle>
    </Panel>
    <Panel $w={476}>
      <Row $justify="flex-start" $pad="2px 0 0 3px">
        <Matrix $cols="repeat(4, 79px)" $row={71}>
          {modifyTools.map(([n, icon]) => <IconButton key={n} aria-label={n}>{icon}</IconButton>)}
        </Matrix>
        <Matrix $cols="repeat(3, 50px)" $row={48}>
          {smallTools.map(([n, icon]) => <IconButton key={n} aria-label={n}>{icon}</IconButton>)}
        </Matrix>
      </Row>
      <PanelTitle>Modify</PanelTitle>
    </Panel>
    <Panel $w={112}>
      <Matrix $cols="1fr" $row={72} $pad="2px 0 0 12px">
        <IconButton $left aria-label="Measure Between"><RulerIcon /><Caret /></IconButton>
        <IconButton $left aria-label="Aligned Dimension"><AlignedDimIcon /><Caret /></IconButton>
      </Matrix>
      <PanelTitle>Measure</PanelTitle>
    </Panel>
    <Panel $w={92}>
      <Matrix $cols="1fr" $row={72} $pad="2px 4px 0 0">
        <IconButton aria-label="Create Similar"><CreateSimilarIcon /></IconButton>
        <IconButton aria-label="Create Group"><CreateAssemblyIcon /></IconButton>
      </Matrix>
      <PanelTitle>Create</PanelTitle>
    </Panel>
    <Panel $w={228} $context>
      <Row $pad="2px 0 0 2px">
        <BigButton><EditBoundaryIcon /><span>{"Edit\nBoundary"}</span></BigButton>
        <BigButton><VisibilityIcon /><span>{"Visibility\nSettings"}</span></BigButton>
      </Row>
      <PanelTitle $bg={c.olive}>Mode</PanelTitle>
    </Panel>
    <Panel $w={272} $context>
      <Row $justify="flex-start">
        <SplitButton>
          <BigButton><WorkPlaneIcon /><span>{"Edit\nWork Plane"}</span></BigButton>
          <button aria-label="More work plane options"><Caret /></button>
        </SplitButton>
        <Fill><BigButton $off><PickNewIcon /><span>{"Pick\nNew"}</span></BigButton></Fill>
      </Row>
      <PanelTitle $bg={c.olive}>Work Plane</PanelTitle>
    </Panel>
    <Panel $w={190} $context>
      <Matrix $cols="1fr" $row={44} $pad="30px 4px 0">
        <PlaceButton $active><FaceIcon />Face</PlaceButton>
        <PlaceButton><PlaceWorkPlaneIcon />Work Plane</PlaceButton>
      </Matrix>
      <PanelTitle $bg={c.olive}>Placement</PanelTitle>
    </Panel>
    <Panel $w={316} $context>
      <Row>
        <BigButton><LoadIcon /><span>{"Load into\nProject"}</span></BigButton>
        <BigButton><LoadCloseIcon /><span>{"Load into\nProject and Close"}</span></BigButton>
      </Row>
      <PanelTitle $bg="#e1e6f0">Family Editor</PanelTitle>
    </Panel>
    <RibbonRest />
  </Ribbon>
);

const PropertyRows = () => (
  <PropTable>
    <colgroup>
      <col />
      <col style={{ width: 202 }} />
      <col style={{ width: 25 }} />
    </colgroup>
    {groups.map((g) => (
      <tbody key={g.title}>
        <GroupRow>
          <th colSpan={2} scope="rowgroup">{g.title}</th>
          <td><Collapse /></td>
        </GroupRow>
        {g.rows.map((r) => (
          <PropRow key={r.name} $off={r.off}>
            <th scope="row">{r.name}</th>
            {r.focus ? <FocusCell>{r.value}</FocusCell> : <td>{r.value}</td>}
            <td>{!r.noLink && <Associate aria-label={`Associate ${r.name}`} />}</td>
          </PropRow>
        ))}
      </tbody>
    ))}
  </PropTable>
);

const PropertiesPalette = () => (
  <Palette $grow={883}>
    <PaletteHeader>
      <PaletteTitle>Properties</PaletteTitle>
      <button aria-label="Close Properties"><Close /></button>
    </PaletteHeader>
    <TypeSelector aria-label="Type selector">
      <Thumb><RevitThumb /></Thumb>
      <Caret w={15} fill="#909090" />
    </TypeSelector>
    <FilterRow>
      <FilterField>
        <FilterSelect aria-label="Element filter"><option>Detail Items (1)</option></FilterSelect>
        <Chevron w={14} />
      </FilterField>
      <EditType><EditTypeIcon />Edit Type</EditType>
    </FilterRow>
    <GridArea>
      <GridClip><PropertyRows /></GridClip>
      <ScrollTrack>
        <ScrollButton aria-label="Scroll up"><Chevron up /></ScrollButton>
        <ScrollLane><ScrollThumb /></ScrollLane>
        <ScrollButton $end aria-label="Scroll down"><Chevron /></ScrollButton>
      </ScrollTrack>
    </GridArea>
    <PaletteFooter>
      <HelpLink href="#help">Properties help</HelpLink>
      <ApplyButton>Apply</ApplyButton>
    </PaletteFooter>
  </Palette>
);

const BrowserPalette = () => (
  <Palette $grow={608}>
    <PaletteHeader>
      <PaletteTitle>Project Browser - 2024 draw order test</PaletteTitle>
      <button aria-label="Close Project Browser"><Close /></button>
    </PaletteHeader>
    <BrowserBody>
      <SearchBox>
        <SearchIcon />
        <input type="search" placeholder="Search" aria-label="Search" />
      </SearchBox>
      <ul>
        {tree.map((n, i) => (
          <TreeItem key={i} $selected={n.selected}>
            <svg width={n.w} height={40} viewBox={`0 0 ${n.w} 40`} fill="none" aria-hidden="true">
              <path d={n.d} stroke="#bdbdbd" strokeWidth={2} strokeDasharray="6 4" />
              {n.dash && <path d={`M${n.dash} 20h16`} stroke="#777" strokeWidth={4} />}
            </svg>
            <TreeLabel>{n.icon}{n.label}</TreeLabel>
          </TreeItem>
        ))}
      </ul>
    </BrowserBody>
  </Palette>
);

const ElevationDrawing = () => (
  <Drawing viewBox="484 382 2164 1402" fill="none" strokeWidth={2.4} role="img" aria-label="Front elevation">
    <path d="M1272 1579H2462" stroke="#222" strokeDasharray="30 22 2 22" strokeDashoffset={6} />
    <path d="M1645 1579V1227H2105V1579z" stroke="#222" />
    <g stroke={c.ref}>
      <path d="M1272 1579H1319M2462 1579H2507" />
      <path d="M1351 1579H2432" strokeDasharray="32.5 32.9" />
      <path d="M1432 1413H1479M2229 1413H2278" />
      <path d="M1512 1413H2220" strokeDasharray="32.4 32.700" />
      <path d="M1865 570V588" />
      <path d="M1865 620V1764" strokeDasharray="32.5 32.900" />
    </g>
    <circle cx="1866" cy="1414" r="87.500" stroke={c.ink} strokeWidth={2} />
    <path d="M1793 1341L1865 1413" stroke="#777" strokeWidth={2} />
    {[1325, 1503].map((y) => (
      <circle key={y} cx="1865" cy={y} r="8" fill="#6fa9e3" fillOpacity={0.85} stroke="#6b7075" strokeWidth={2.5} />
    ))}
    <g stroke={c.ink} strokeWidth={2.6}>
      <path d="M1762 1309H1788M1755 1330H1778M1768 1304L1757 1334M1787 1304L1773 1334" />
      <path d="M1782 1335V1331Q1786 1327 1791 1331V1335" />
      <path d="M1781 1335H1792V1342H1781z" fill="#d5e6f6" />
    </g>
    <circle cx="2537" cy="1579" r="30" fill="#fff" stroke={c.ink} strokeWidth={2} />
    <path d="M2537 1579V1549A30 30 0 0 0 2507 1579zM2537 1579V1609A30 30 0 0 0 2567 1579z" fill={c.ink} />
    <g fill="#1c1c1c" fontSize="21" textAnchor="end">
      <text x="2493" y="1574">Ref. Level</text>
      <text x="2493" y="1596">0' - 0"</text>
    </g>
  </Drawing>
);

const Highlight = ({ x, y, w, h }: { x: number; y: number; w: number; h: number }) => (
  <Marker $x={x} $y={y} width={w} height={h + 6} aria-hidden="true">
    <defs>
      <filter id={`rough${x}`} x="-5%" y="-20%" width="110%" height="140%">
        <feTurbulence type="fractalNoise" baseFrequency="0.35" numOctaves="2" result="n" />
        <feDisplacementMap in="SourceGraphic" in2="n" scale="5" xChannelSelector="R" yChannelSelector="G" result="d" />
        <feDropShadow in="d" dx="0" dy="3" stdDeviation="2" floodOpacity="0.35" />
      </filter>
    </defs>
    <rect x="6" y="6" width={w - 12} height={h - 12} rx="20" fill="none" stroke={c.red} strokeWidth="8" filter={`url(#rough${x})`} />
  </Marker>
);

export default function App() {
  return (
    <Shell>
      <GlobalStyle />
      <TabBar>
        <RibbonTab $kind="file">File</RibbonTab>
        {tabs.map((t) => <RibbonTab key={t}>{t}</RibbonTab>)}
        <RibbonTab $kind="active">Modify | Detail Items</RibbonTab>
        <RibbonToggle aria-label="Minimize ribbon">
          <svg width={32} height={20} viewBox="0 0 32 20" aria-hidden="true">
            <rect x="1" y="1" width="29" height="17" rx="5" fill="#f0f0f0" stroke="#4b4b4b" strokeWidth="2" />
            <path d="M10 13h12l-6-7z" fill="#333" />
          </svg>
          <Caret />
        </RibbonToggle>
      </TabBar>
      <RibbonPanels />
      <OptionsBar>Modify | Detail Items</OptionsBar>
      <Workspace>
        <Dock>
          <PropertiesPalette />
          <BrowserPalette />
        </Dock>
        <ViewArea>
          <ViewTabs>
            <ViewTab><button><HouseIcon />View 1</button></ViewTab>
            <ViewTab $active>
              <button><ElevationIcon />Front</button>
              <button aria-label="Close Front"><Close /></button>
            </ViewTab>
            <ViewTab><button><PlanIcon />Ref. Level</button></ViewTab>
            <ViewTab><button><PlanIcon />L1 - Architectural</button></ViewTab>
            <ViewTab><button><SectionIcon />Section 1</button></ViewTab>
          </ViewTabs>
          <Canvas>
            <HideIsolate>Temporary Hide/Isolate</HideIsolate>
            <ElevationDrawing />
          </Canvas>
        </ViewArea>
      </Workspace>
      <Highlight x={1437} y={25} w={447} h={225} />
      <Highlight x={2} y={545} w={264} h={67} />
    </Shell>
  );
}
